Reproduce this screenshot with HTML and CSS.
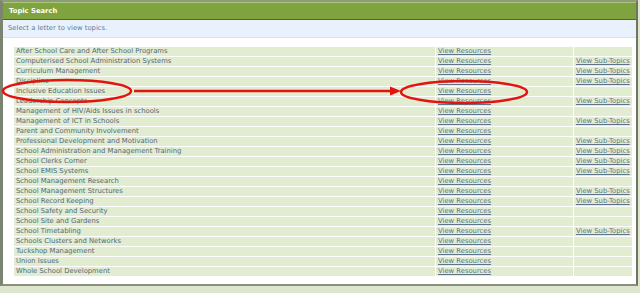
FILE: index.html
```html
<!DOCTYPE html>
<html lang="en">
<head>
    <meta charset="UTF-8">
    <meta name="viewport" content="width=device-width, initial-scale=1.0">
    <title>Topic Search</title>
    <link rel="stylesheet" href="styles.css">
</head>
<body>
    <div class="panel">
        <div class="panel-header">Topic Search</div>
        <div class="panel-intro">Select a letter to view topics.</div>
        <div class="panel-body">
            <table class="topics">
                <tr><td>After School Care and After School Programs</td><td><a href="#">View Resources</a></td><td></td></tr>
                <tr><td>Computerised School Administration Systems</td><td><a href="#">View Resources</a></td><td><a href="#">View Sub-Topics</a></td></tr>
                <tr><td>Curriculum Management</td><td><a href="#">View Resources</a></td><td><a href="#">View Sub-Topics</a></td></tr>
                <tr><td>Discipline</td><td><a href="#">View Resources</a></td><td><a href="#">View Sub-Topics</a></td></tr>
                <tr><td>Inclusive Education Issues</td><td><a href="#">View Resources</a></td><td></td></tr>
                <tr><td>Leadership Concepts</td><td><a href="#">View Resources</a></td><td><a href="#">View Sub-Topics</a></td></tr>
                <tr><td>Management of HIV/Aids Issues in schools</td><td><a href="#">View Resources</a></td><td></td></tr>
                <tr><td>Management of ICT in Schools</td><td><a href="#">View Resources</a></td><td><a href="#">View Sub-Topics</a></td></tr>
                <tr><td>Parent and Community Involvement</td><td><a href="#">View Resources</a></td><td></td></tr>
                <tr><td>Professional Development and Motivation</td><td><a href="#">View Resources</a></td><td><a href="#">View Sub-Topics</a></td></tr>
                <tr><td>School Administration and Management Training</td><td><a href="#">View Resources</a></td><td><a href="#">View Sub-Topics</a></td></tr>
                <tr><td>School Clerks Corner</td><td><a href="#">View Resources</a></td><td><a href="#">View Sub-Topics</a></td></tr>
                <tr><td>School EMIS Systems</td><td><a href="#">View Resources</a></td><td><a href="#">View Sub-Topics</a></td></tr>
                <tr><td>School Management Research</td><td><a href="#">View Resources</a></td><td></td></tr>
                <tr><td>School Management Structures</td><td><a href="#">View Resources</a></td><td><a href="#">View Sub-Topics</a></td></tr>
                <tr><td>School Record Keeping</td><td><a href="#">View Resources</a></td><td><a href="#">View Sub-Topics</a></td></tr>
                <tr><td>School Safety and Security</td><td><a href="#">View Resources</a></td><td></td></tr>
                <tr><td>School Site and Gardens</td><td><a href="#">View Resources</a></td><td></td></tr>
                <tr><td>School Timetabling</td><td><a href="#">View Resources</a></td><td><a href="#">View Sub-Topics</a></td></tr>
                <tr><td>Schools Clusters and Networks</td><td><a href="#">View Resources</a></td><td></td></tr>
                <tr><td>Tuckshop Management</td><td><a href="#">View Resources</a></td><td></td></tr>
                <tr><td>Union Issues</td><td><a href="#">View Resources</a></td><td></td></tr>
                <tr><td>Whole School Development</td><td><a href="#">View Resources</a></td><td></td></tr>
            </table>
        </div>
    </div>

    <!-- red annotation marks drawn over the table -->
    <svg class="marks" width="640" height="293" viewBox="0 0 640 293">
        <ellipse cx="67" cy="91" rx="64" ry="11" fill="none" stroke="#e3140f" stroke-width="2.5"/>
        <line x1="134" y1="91" x2="393" y2="91" stroke="#e3140f" stroke-width="2.5"/>
        <polygon points="390,86.5 401,91 390,95.5" fill="#e3140f"/>
        <ellipse cx="464" cy="92" rx="63" ry="11" fill="none" stroke="#e3140f" stroke-width="2.5"/>
    </svg>
</body>
</html>
```

FILE: styles.css
```css
body {
    margin: 0;
    background: #dde6cc;
    font-family: "DejaVu Sans", Verdana, sans-serif;
    font-size: 6.8px;
    color: #52697a;
}

.panel {
    width: 633px;
    background: #ffffff;
    border-left: 3px solid #7b8470;
    border-right: 2px solid #6d7565;
    border-top: 2px solid #8d9a7c;
    border-bottom: 2px solid #8a9080;
}

.panel-header {
    height: 16px;
    line-height: 16px;
    padding-left: 6px;
    background: #7ea33f;
    border-top: 1px solid #a9c777;
    border-bottom: 1px solid #4f6a25;
    color: #ffffff;
    font-weight: bold;
    font-size: 6.8px;
}

.panel-intro {
    height: 17px;
    line-height: 17px;
    padding-left: 5px;
    background: #e9f2fc;
    border-bottom: 1px solid #d6e2ee;
    color: #5d7b9b;
    font-size: 6.8px;
}

.panel-body {
    padding: 8px 5px 7px 10px;
}

.topics {
    width: 620px;
    border-collapse: separate;
    border-spacing: 1px;
}

.topics td {
    height: 9px;
    padding: 0 2px;
    line-height: 9px;
    background: #e1ecd1;
    white-space: nowrap;
}

.topics td:nth-child(1) {
    width: 417px;
}

.topics td:nth-child(2) {
    width: 133px;
}

.topics a {
    color: #5f7587;
    text-decoration: underline;
}

.marks {
    position: absolute;
    top: 0;
    left: 0;
    pointer-events: none;
}
```
